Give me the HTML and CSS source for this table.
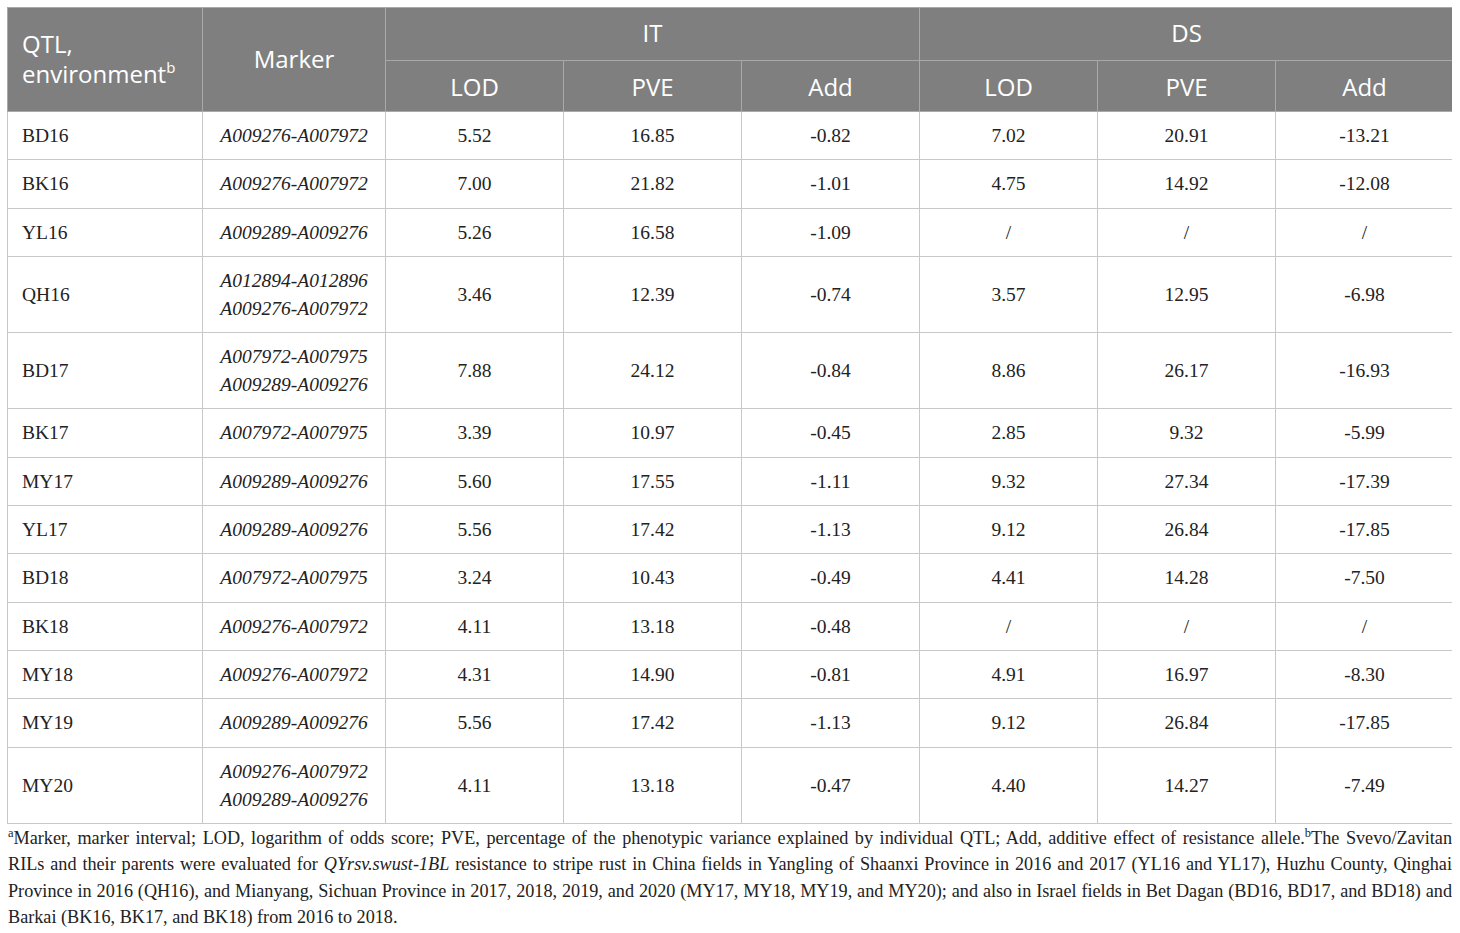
FILE: index.html
```html
<!DOCTYPE html>
<html lang="en">
<head>
  <meta charset="UTF-8">
  <meta name="viewport" content="width=device-width, initial-scale=1.0">
  <title>QTL table</title>
  <link rel="stylesheet" href="styles.css">
</head>
<body>

  <table class="qtl-table">
    <colgroup>
      <col class="c-env">
      <col class="c-marker">
      <col class="c-num"><col class="c-num"><col class="c-num">
      <col class="c-num"><col class="c-num"><col class="c-num">
    </colgroup>
    <thead>
      <tr class="head-top">
        <th rowspan="2" class="left">QTL,<br>environment<sup>b</sup></th>
        <th rowspan="2">Marker</th>
        <th colspan="3">IT</th>
        <th colspan="3">DS</th>
      </tr>
      <tr class="head-sub">
        <th>LOD</th><th>PVE</th><th>Add</th>
        <th>LOD</th><th>PVE</th><th>Add</th>
      </tr>
    </thead>
    <tbody>
      <tr><td class="left">BD16</td><td class="marker">A009276-A007972</td><td>5.52</td><td>16.85</td><td>-0.82</td><td>7.02</td><td>20.91</td><td>-13.21</td></tr>
      <tr><td class="left">BK16</td><td class="marker">A009276-A007972</td><td>7.00</td><td>21.82</td><td>-1.01</td><td>4.75</td><td>14.92</td><td>-12.08</td></tr>
      <tr><td class="left">YL16</td><td class="marker">A009289-A009276</td><td>5.26</td><td>16.58</td><td>-1.09</td><td>/</td><td>/</td><td>/</td></tr>
      <tr><td class="left">QH16</td><td class="marker">A012894-A012896<br>A009276-A007972</td><td>3.46</td><td>12.39</td><td>-0.74</td><td>3.57</td><td>12.95</td><td>-6.98</td></tr>
      <tr><td class="left">BD17</td><td class="marker">A007972-A007975<br>A009289-A009276</td><td>7.88</td><td>24.12</td><td>-0.84</td><td>8.86</td><td>26.17</td><td>-16.93</td></tr>
      <tr><td class="left">BK17</td><td class="marker">A007972-A007975</td><td>3.39</td><td>10.97</td><td>-0.45</td><td>2.85</td><td>9.32</td><td>-5.99</td></tr>
      <tr><td class="left">MY17</td><td class="marker">A009289-A009276</td><td>5.60</td><td>17.55</td><td>-1.11</td><td>9.32</td><td>27.34</td><td>-17.39</td></tr>
      <tr><td class="left">YL17</td><td class="marker">A009289-A009276</td><td>5.56</td><td>17.42</td><td>-1.13</td><td>9.12</td><td>26.84</td><td>-17.85</td></tr>
      <tr><td class="left">BD18</td><td class="marker">A007972-A007975</td><td>3.24</td><td>10.43</td><td>-0.49</td><td>4.41</td><td>14.28</td><td>-7.50</td></tr>
      <tr><td class="left">BK18</td><td class="marker">A009276-A007972</td><td>4.11</td><td>13.18</td><td>-0.48</td><td>/</td><td>/</td><td>/</td></tr>
      <tr><td class="left">MY18</td><td class="marker">A009276-A007972</td><td>4.31</td><td>14.90</td><td>-0.81</td><td>4.91</td><td>16.97</td><td>-8.30</td></tr>
      <tr><td class="left">MY19</td><td class="marker">A009289-A009276</td><td>5.56</td><td>17.42</td><td>-1.13</td><td>9.12</td><td>26.84</td><td>-17.85</td></tr>
      <tr><td class="left">MY20</td><td class="marker">A009276-A007972<br>A009289-A009276</td><td>4.11</td><td>13.18</td><td>-0.47</td><td>4.40</td><td>14.27</td><td>-7.49</td></tr>
    </tbody>
  </table>

  <p class="footnote"><sup>a</sup>Marker, marker interval; LOD, logarithm of odds score; PVE, percentage of the phenotypic variance explained by individual QTL; Add, additive effect of resistance allele.<sup>b</sup>The Svevo/Zavitan<br>RILs and their parents were evaluated for <i>QYrsv.swust-1BL</i> resistance to stripe rust in China fields in Yangling of Shaanxi Province in 2016 and 2017 (YL16 and YL17), Huzhu County, Qinghai<br>Province in 2016 (QH16), and Mianyang, Sichuan Province in 2017, 2018, 2019, and 2020 (MY17, MY18, MY19, and MY20); and also in Israel fields in Bet Dagan (BD16, BD17, and BD18) and
    <span class="fn-last">Barkai (BK16, BK17, and BK18) from 2016 to 2018.</span></p>

</body>
</html>
```

FILE: styles.css
```css
body {
  margin: 7px 8px 7px 7px;
  background-color: #fff;
  color: #222;
  font-family: "Liberation Serif", "Times New Roman", serif;
}
.qtl-table {
  width: 1445px;
  border-collapse: collapse;
  table-layout: fixed;
}
.c-env {
  width: 195px;
}
.c-marker {
  width: 183px;
}
.c-num {
  width: 178px;
}
th {
  background-color: #7f7f7f;
  color: #fff;
  font-family: "Open Sans", "Liberation Sans", sans-serif;
  font-weight: normal;
  font-size: 24px;
  line-height: 30px;
  text-align: center;
  padding: 0 14px;
  border: 1px solid #a9a9a9;
}
th sup {
  font-size: 15px;
  line-height: 0;
  vertical-align: 10px;
}
.head-top th {
  height: 50px;
  padding-bottom: 2px;
}
.head-sub th {
  height: 48px;
  padding-top: 2px;
}
th.left {
  text-align: left;
}
td {
  font-size: 19.5px;
  line-height: 28px;
  text-align: center;
  padding: 10px 14px 9.3px;
  border: 1px solid #c8c8c8;
}
td.left {
  text-align: left;
}
td.marker {
  font-style: italic;
}
.footnote {
  margin: 1px 0 0 1px;
  width: 1444px;
  font-size: 18.2px;
  line-height: 26.5px;
  text-align: justify;
  text-align-last: justify;
}
.footnote sup {
  font-size: 12.5px;
  line-height: 0;
  vertical-align: 7px;
}
.fn-last {
  display: block;
  text-align-last: left;
}
```
